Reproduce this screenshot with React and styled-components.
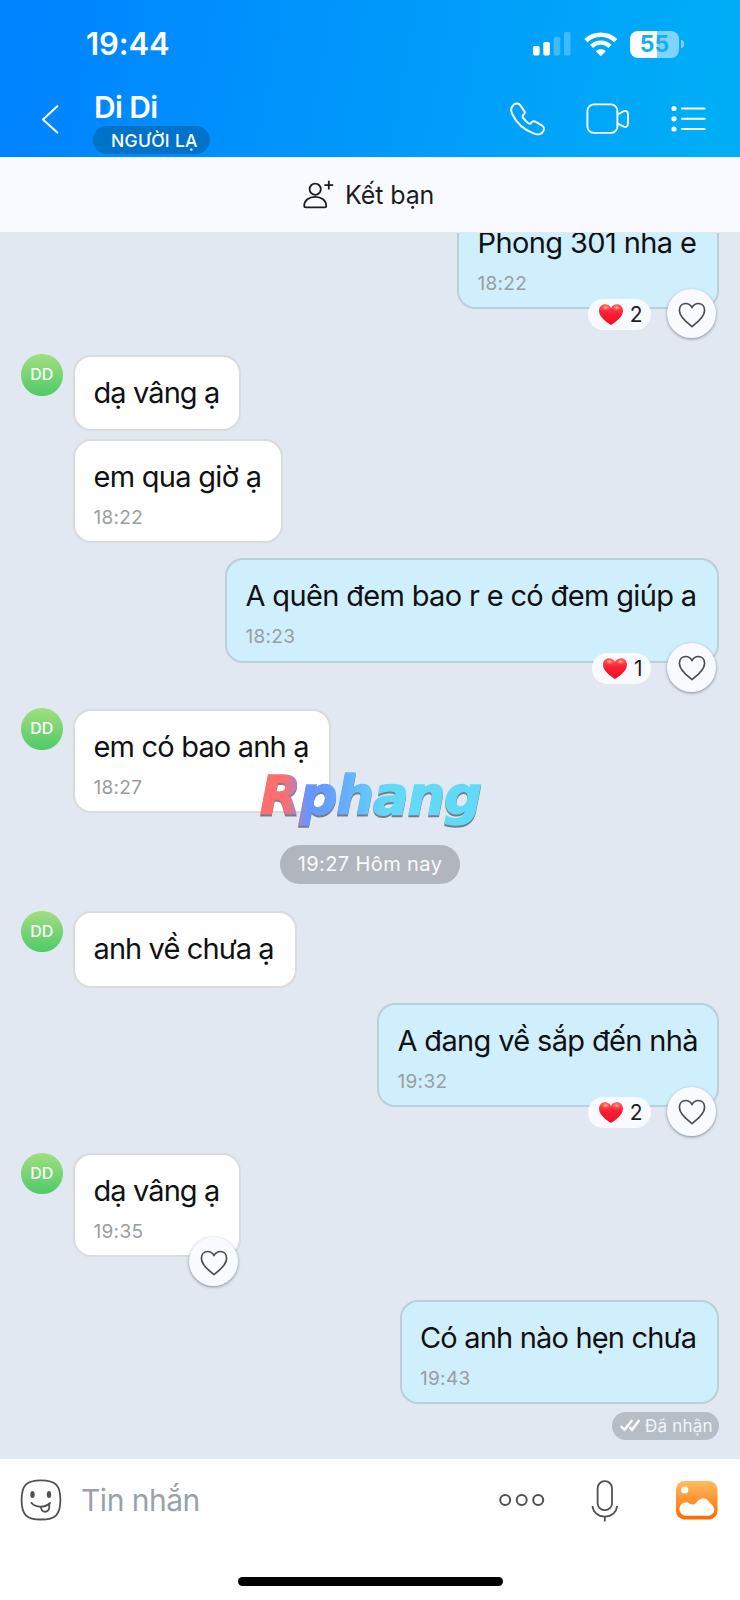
import styled, { createGlobalStyle, css } from 'styled-components';

const MESSAGES = [
  { id: 1, mine: true, text: 'Phong 301 nha e', time: '18:22', width: 262, gap: 0, tracking: -0.6, likes: 2, react: true },
  { id: 2, text: 'dạ vâng ạ', width: 168, gap: 45.4, tracking: -0.9, avatar: true },
  { id: 3, text: 'em qua giờ ạ', time: '18:22', width: 210, gap: 8, tracking: -0.72 },
  { id: 4, mine: true, text: 'A quên đem bao r e có đem giúp a', time: '18:23', width: 494, gap: 15, tracking: -0.66, likes: 1, react: true },
  { id: 5, text: 'em có bao anh ạ', time: '18:27', width: 258, gap: 46.2, tracking: -0.82, avatar: true, watermark: true },
  { id: 6, date: '19:27 Hôm nay' },
  { id: 7, text: 'anh về chưa ạ', width: 223.5, gap: 27.5, tracking: -0.9, avatar: true },
  { id: 8, mine: true, text: 'A đang về sắp đến nhà', time: '19:32', width: 342, gap: 15, tracking: -0.65, likes: 2, react: true },
  { id: 9, text: 'dạ vâng ạ', time: '19:35', width: 168, gap: 46.2, tracking: -0.9, avatar: true, react: true },
  { id: 10, mine: true, text: 'Có anh nào hẹn chưa', time: '19:43', width: 319.5, gap: 42.7, tracking: -0.82 },
];

function StatusIcons() {
  return (
    <StatusGroup>
      <svg width='38' height='24' viewBox='0 0 38 24' fill='#fff'>
        <rect x='0' y='14' width='6.6' height='9.4' rx='1.6' />
        <rect x='10.3' y='10' width='6.6' height='13.4' rx='1.6' />
        <rect x='20.7' y='4.8' width='6.6' height='18.6' rx='1.6' opacity='.25' />
        <rect x='31' y='0' width='6.6' height='23.4' rx='1.6' opacity='.25' />
      </svg>
      <svg width='34' height='25' viewBox='0 0 34 25' fill='none' stroke='#fff'>
        <path d='M1.9 8.6C10.2.8 23.4.8 31.7 8.600' strokeWidth='4.6' />
        <path d='M7.5 14.4c5.3-5 13.3-5 18.6 0' strokeWidth='4.4' />
        <path d='M16.800 24.200l-5-5c2.800-2.500 7.200-2.500 10 0z' fill='#fff' stroke='none' />
      </svg>
      <Battery>
        <BatteryBody>55</BatteryBody>
        <BatteryTip />
      </Battery>
    </StatusGroup>
  );
}

function HeartOutline() {
  return (
    <svg width='28' height='26' viewBox='0 0 28 26' fill='none' stroke='#4c4d50' strokeWidth='1.7' strokeLinejoin='round'>
      <path d='M14 24.6C9.6 21.2 1.4 15 1.4 8.4 1.4 4.2 4.2 1.5 7.7 1.5c2.8 0 5 1.5 6.3 4.1 1.3-2.6 3.5-4.1 6.3-4.1 3.5 0 6.3 2.7 6.3 6.9 0 6.6-8.2 12.8-12.6 16.2z' />
    </svg>
  );
}

function HeartFilled() {
  return (
    <svg width='24' height='21' viewBox='0 0 24 21'>
      <defs>
        <linearGradient id='heart' x1='0' y1='0' x2='0' y2='1'>
          <stop offset='0' stopColor='#ff5a52' />
          <stop offset='.45' stopColor='#fd1c36' />
          <stop offset='1' stopColor='#ee1219' />
        </linearGradient>
        <radialGradient id='shine'>
          <stop offset='0' stopColor='#ffc9a0' stopOpacity='.95' />
          <stop offset='1' stopColor='#ff6a55' stopOpacity='0' />
        </radialGradient>
      </defs>
      <path
        d='M12 21C8.5 18.7 0 13.3 0 6.8 0 2.8 2.7.3 6 .3c2.7 0 4.8 1.3 6 3.6C13.2 1.6 15.3.3 18 .3c3.3 0 6 2.5 6 6.5 0 6.5-8.5 11.9-12 14.2z'
        fill='url(#heart)'
      />
      <ellipse cx='6.5' cy='3.6' rx='4.6' ry='3' fill='url(#shine)' />
      <ellipse cx='17.5' cy='3.6' rx='4.6' ry='3' fill='url(#shine)' />
    </svg>
  );
}

function Header() {
  return (
    <HeaderContainer>
      <StatusBar>
        <Clock>19:44</Clock>
        <StatusIcons />
      </StatusBar>
      <TitleBar>
        <svg width='18' height='29' viewBox='0 0 18 29' fill='none' stroke='#fff' strokeWidth='2'>
          <path d='M16.3 1.3L2 14.5l14.3 13' strokeLinecap='round' strokeLinejoin='round' />
        </svg>
        <Contact>
          <ContactName>Di Di</ContactName>
          <StrangerTag>NGƯỜI LẠ</StrangerTag>
        </Contact>
        <Actions>
          <svg width='36' height='34' viewBox='0 0 36 34' fill='none' stroke='#fff' strokeWidth='1.9' strokeLinejoin='round'>
            <path d='M3.7 2.7C5.6 1.2 8.6 1 10 2.9l4.3 6.2c.8 1.2.5 2.4-.6 3.4-1.2 1-1.5 2-.7 3.1 1.6 2.4 3.3 4.2 5.5 5.7 1.1.7 2 .4 2.8-.7 1.1-1.5 2.5-1.8 4-1l6.8 4c2.2 1.3 2.4 3.5 1 5.8-1.7 2.7-5.2 3.6-9 2.2C13.6 27.8 6.2 20.5 2.2 12 .5 8.1 1.2 4.7 3.7 2.7z' />
          </svg>
          <svg width='44' height='32' viewBox='0 0 44 32' fill='none' stroke='#fff' strokeWidth='1.9' strokeLinejoin='round'>
            <rect x='1.4' y='1.4' width='30' height='28.5' rx='6.5' />
            <path d='M31.4 11.8l5.600-3.300c2.600-1.500 5-.2 5 2.500v9.800c0 2.700-2.400 4-5 2.500l-5.600-3' />
          </svg>
          <svg width='36' height='28' viewBox='0 0 36 28' fill='#fff'>
            <circle cx='3' cy='3.5' r='2.6' />
            <circle cx='3' cy='13.8' r='2.6' />
            <circle cx='3' cy='24' r='2.6' />
            <path d='M11 3.5h22.8M11 13.8h22.8M11 24h22.8' stroke='#fff' strokeWidth='2' strokeLinecap='round' />
          </svg>
        </Actions>
      </TitleBar>
    </HeaderContainer>
  );
}

function Message({ mine, text, time, width, gap, tracking, avatar, likes, react, watermark }) {
  return (
    <MessageRow $mine={mine} $gap={gap}>
      {!mine && <AvatarSlot>{avatar && <Avatar>DD</Avatar>}</AvatarSlot>}
      <Bubble $mine={mine} $width={width} $tall={!!time}>
        <BubbleText $tracking={tracking}>{text}</BubbleText>
        {time && <BubbleTime>{time}</BubbleTime>}
        {likes && (
          <LikeCount>
            <HeartFilled />
            {likes}
          </LikeCount>
        )}
        {react && (
          <ReactButton>
            <HeartOutline />
          </ReactButton>
        )}
        {watermark && <Watermark>Rphang</Watermark>}
      </Bubble>
    </MessageRow>
  );
}

function Composer() {
  return (
    <ComposerContainer>
      <InputRow>
        <svg width='42' height='42' viewBox='0 0 42 42' fill='none' stroke='#4f5153' strokeWidth='1.8'>
          <path d='M21 1.4C35.5 1.4 40.4 6.3 40.4 21S35.5 40.5 21 40.5 1.6 35.7 1.6 21 6.5 1.4 21 1.4z' />
          <ellipse cx='12.5' cy='15.4' rx='2.2' ry='3.5' fill='#4f5153' stroke='none' />
          <ellipse cx='29' cy='15.4' rx='2.2' ry='3.5' fill='#4f5153' stroke='none' />
          <path d='M11.4 23.9c4.6 5 13.4 5.2 18.6.1M21 27.8c-.3 6.8 8.7 6.6 8.3-.5v-2.6' strokeLinecap='round' />
        </svg>
        <Placeholder>Tin nhắn</Placeholder>
        <svg width='46' height='14' viewBox='0 0 46 14' fill='none' stroke='#4f5153' strokeWidth='2'>
          <circle cx='6.2' cy='7' r='5' />
          <circle cx='22.7' cy='7' r='5' />
          <circle cx='39.2' cy='7' r='5' />
        </svg>
        <MicIcon width='28' height='42' viewBox='0 0 28 42' fill='none' stroke='#4f5153' strokeWidth='1.8'>
          <rect x='6.6' y='1.2' width='14.4' height='29' rx='7' />
          <path d='M1.5 26c.5 6.2 5.7 10.6 12.3 10.6S25.6 32.2 26.1 26M13.8 36.6v5' />
        </MicIcon>
        <svg width='42' height='39' viewBox='0 0 42 39'>
          <defs>
            <linearGradient id='photo' x1='0' y1='0' x2='0' y2='1'>
              <stop offset='0' stopColor='#ffbd5f' />
              <stop offset='.5' stopColor='#ff922f' />
              <stop offset='1' stopColor='#ff6900' />
            </linearGradient>
          </defs>
          <rect width='41.5' height='38.5' rx='8.5' fill='url(#photo)' />
          <circle cx='8.7' cy='9' r='3.6' fill='#fff' />
          <path
            d='M3.5 28c0-3.8 3.1-6.8 6.6-6.8 3.2 0 4.2 2.9 7.2 2.3 3.3-.6 5.1-6.2 9.7-6.2 3.5 0 5.2 2.5 7.4 4.9 2.2 2.3 3.9 3.7 3.9 6.5 0 3.6-3 6-6.6 6H10.1c-3.7 0-6.6-2.8-6.6-6.7z'
            fill='#fff'
          />
        </svg>
      </InputRow>
      <HomeIndicator />
    </ComposerContainer>
  );
}

function App() {
  return (
    <>
      <GlobalStyle />
      <Screen>
        <Header />
        <AddFriendBar>
          <svg width='31' height='29' viewBox='0 0 31 29' fill='none' stroke='#1d1d1f' strokeWidth='1.8' strokeLinejoin='round'>
            <circle cx='12.2' cy='9.2' r='5.6' />
            <path d='M1.2 25.8C1.2 20.3 6 16.8 12.2 16.8s11 3.5 11 9c0 1-.6 1.6-1.6 1.6H2.8c-1 0-1.6-.6-1.6-1.6z' />
            <path d='M25.8.8v8.8M21.4 5.2h8.8' />
          </svg>
          <span>Kết bạn</span>
        </AddFriendBar>
        <Chat>
          {MESSAGES.map((item) =>
            item.date ? (
              <DatePill key={item.id}>{item.date}</DatePill>
            ) : (
              <Message key={item.id} {...item} />
            )
          )}
          <Delivered>
            <svg width='20' height='13' viewBox='0 0 20 13' fill='none' stroke='#fff' strokeWidth='2.4'>
              <path d='M.8 7l3.7 3.8L12.3 1M9.5 8.2l2.5 2.6L19.4 1' />
            </svg>
            <span>Đã nhận</span>
          </Delivered>
        </Chat>
        <Composer />
      </Screen>
    </>
  );
}

const GlobalStyle = createGlobalStyle`
  * {
    box-sizing: border-box;
  }
  body {
    margin: 0;
    font-family: Inter, 'Noto Sans', 'Liberation Sans', sans-serif;
  }
  svg {
    display: block;
    flex-shrink: 0;
  }
`;

const Screen = styled.div`
  display: flex;
  flex-direction: column;
  width: 740px;
  height: 1600px;
  overflow: hidden;
  background-color: #fff;
`;

const HeaderContainer = styled.header`
  height: 157px;
  flex-shrink: 0;
  color: #fff;
  background: linear-gradient(100deg, #0084ff 5%, #00aef7 97%);
`;

const StatusBar = styled.div`
  display: flex;
  justify-content: space-between;
  height: 88px;
  padding: 0 56px 0 86px;
`;

const Clock = styled.span`
  padding-top: 24px;
  line-height: 40px;
  font-size: 31px;
  font-weight: 600;
  letter-spacing: -0.1px;
`;

const StatusGroup = styled.div`
  display: flex;
  align-items: center;
  height: 88px;

  svg:nth-child(2) {
    margin: 0 12px 0 13px;
  }
`;

const Battery = styled.div`
  display: flex;
  align-items: center;
  gap: 2px;
`;

const BatteryBody = styled.div`
  width: 49px;
  height: 27px;
  border-radius: 8px;
  text-align: center;
  line-height: 27px;
  font-size: 23px;
  font-weight: 650;
  color: #13aef6;
  background: linear-gradient(90deg, #fff 55%, #80d4fb 55%);
`;

const BatteryTip = styled.div`
  width: 3px;
  height: 8px;
  border-radius: 0 4px 4px 0;
  background-color: #80d4fb;
`;

const TitleBar = styled.div`
  display: flex;
  padding: 0 33px 0 41px;

  > svg {
    margin-top: 17px;
  }
`;

const Contact = styled.div`
  margin-left: 34px;
  flex: 1;
`;

const ContactName = styled.div`
  height: 38px;
  padding-left: 1px;
  line-height: 38px;
  font-size: 30px;
  font-weight: 600;
  letter-spacing: -0.6px;
`;

const StrangerTag = styled.div`
  width: 117px;
  height: 28px;
  padding-left: 18px;
  border-radius: 14px;
  line-height: 30px;
  font-size: 17.5px;
  font-weight: 500;
  letter-spacing: 0.3px;
  white-space: nowrap;
  background-color: #0072c9;
`;

const Actions = styled.div`
  display: flex;
  align-items: center;
  height: 62px;

  svg {
    margin-left: 41px;
  }
  svg:nth-child(2) {
    margin-left: 40px;
  }
`;

const AddFriendBar = styled.div`
  display: flex;
  align-items: center;
  height: 76px;
  flex-shrink: 0;
  padding: 0 0 0 303px;
  gap: 11px;
  border-bottom: 1px solid #e6e8eb;
  color: #1d1d1f;
  background-color: #f9faff;
  font-size: 25px;

  span {
    padding-top: 1px;
    letter-spacing: -0.1px;
  }
`;

const Chat = styled.main`
  display: flex;
  flex-direction: column;
  height: 1226px;
  flex-shrink: 0;
  overflow: hidden;
  padding: 0 21px;
  background-color: #e1e8f1;

  > :first-child {
    margin-top: -28px;
  }
`;

const MessageRow = styled.div`
  display: flex;
  flex-shrink: 0;
  justify-content: ${({ $mine }) => ($mine ? 'flex-end' : 'flex-start')};
  margin-top: ${({ $gap }) => $gap}px;
`;

const AvatarSlot = styled.div`
  width: 52px;
`;

const Avatar = styled.div`
  width: 41.5px;
  height: 41.5px;
  margin-top: -0.5px;
  border-radius: 50%;
  text-align: center;
  line-height: 41px;
  font-size: 16px;
  font-weight: 500;
  color: #fff;
  background: linear-gradient(#a1df80, #4fca69);
`;

const Bubble = styled.div`
  position: relative;
  width: ${({ $width }) => $width}px;
  height: ${({ $tall }) => ($tall ? 104.3 : 76.5)}px;
  padding: 17px 0 0 18.5px;
  border: 2px solid;
  border-radius: 18px;
  white-space: nowrap;
  ${({ $mine }) =>
    $mine
      ? css`
          border-color: #b9d0db;
          background-color: #d0effd;
        `
      : css`
          border-color: #dadbdd;
          background-color: #fff;
        `}
`;

const BubbleText = styled.div`
  line-height: 38px;
  font-size: 29px;
  letter-spacing: ${({ $tracking }) => $tracking}px;
  color: #101112;
`;

const BubbleTime = styled.div`
  margin-top: 10px;
  line-height: 24px;
  font-size: 19px;
  letter-spacing: 0.3px;
  color: #999da0;
`;

const LikeCount = styled.div`
  position: absolute;
  right: 66px;
  bottom: -23px;
  display: flex;
  align-items: center;
  gap: 7px;
  height: 31px;
  padding: 0 9px 0 11px;
  border-radius: 16px;
  font-size: 21px;
  letter-spacing: -0.5px;
  color: #1d1e20;
  background-color: #f8faff;
`;

const ReactButton = styled.div`
  position: absolute;
  right: 1px;
  bottom: -31px;
  display: flex;
  align-items: center;
  justify-content: center;
  width: 49px;
  height: 49px;
  padding-top: 2px;
  border-radius: 50%;
  background-color: #f8faff;
  box-shadow: 0 1px 3px rgba(40, 50, 70, 0.5);
`;

const Watermark = styled.div`
  position: absolute;
  left: 185px;
  top: 50px;
  padding-right: 6px;
  line-height: 70px;
  font-family: 'DejaVu Sans', sans-serif;
  font-size: 53px;
  font-weight: bold;
  font-style: italic;
  letter-spacing: -1.2px;
  color: transparent;
  background: linear-gradient(90deg, #ff6e6e 11%, #6795ff 21%, #66a2ff 32%, #63d9f8 56%);
  background-clip: text;
  -webkit-text-stroke: 1.6px transparent;
  filter: drop-shadow(0 2px 0.5px rgba(70, 90, 105, 0.75));
`;

const DatePill = styled.div`
  align-self: center;
  flex-shrink: 0;
  width: 180px;
  height: 38.5px;
  margin-top: 31.9px;
  border-radius: 20px;
  text-align: center;
  line-height: 39px;
  font-size: 20px;
  letter-spacing: 0.4px;
  color: #fafbfc;
  background-color: #b1b6be;
`;

const Delivered = styled.div`
  display: flex;
  align-items: center;
  align-self: flex-end;
  flex-shrink: 0;
  gap: 5px;
  width: 107px;
  height: 28px;
  margin-top: 7.2px;
  padding-left: 8px;
  border-radius: 14px;
  white-space: nowrap;
  font-size: 17px;
  letter-spacing: 0.2px;
  color: #f3f6f8;
  background-color: #b5bec7;
`;

const ComposerContainer = styled.footer`
  display: flex;
  flex-direction: column;
  align-items: center;
  height: 141px;
`;

const InputRow = styled.div`
  display: flex;
  align-items: center;
  width: 100%;
  height: 82px;
  padding: 0 22px 0 20px;
`;

const Placeholder = styled.span`
  flex: 1;
  padding: 0 0 1px 19px;
  font-size: 30px;
  letter-spacing: -0.5px;
  color: #98a2a8;
`;

const MicIcon = styled.svg`
  margin: 2px 57px 0 46px;
`;

const HomeIndicator = styled.div`
  width: 265px;
  height: 9px;
  margin-top: 36px;
  border-radius: 5px;
  background-color: #000;
`;

export default App;
